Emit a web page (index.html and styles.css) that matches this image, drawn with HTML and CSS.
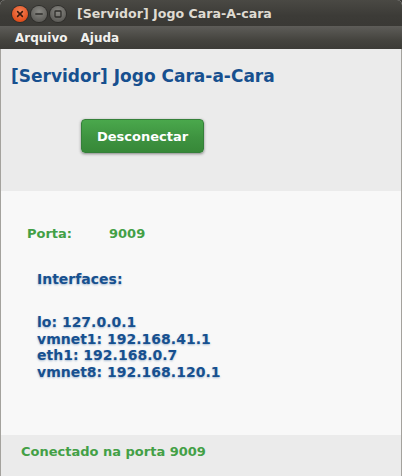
FILE: index.html
```html
<!DOCTYPE html>
<html>
<head>
<meta charset="utf-8">
<link rel="stylesheet" href="styles.css">
</head>
<body>
<div class="window">
  <div class="titlebar">
    <div class="controls">
      <span class="btn close"><svg width="16" height="16" viewBox="0 0 16 16"><path d="M5.6 5.6 L10.4 10.4 M10.4 5.6 L5.6 10.4" stroke="#3a1a0e" stroke-width="1.5" stroke-linecap="round"/></svg></span>
      <span class="btn"><svg width="16" height="16" viewBox="0 0 16 16"><path d="M4.8 8 H11.2" stroke="#2e2d2a" stroke-width="1.5" stroke-linecap="round"/></svg></span>
      <span class="btn"><svg width="16" height="16" viewBox="0 0 16 16"><rect x="5" y="5" width="6" height="6" rx="0.8" fill="none" stroke="#2e2d2a" stroke-width="1.3"/></svg></span>
    </div>
    <div class="wtitle">[Servidor] Jogo Cara-A-cara</div>
  </div>
  <div class="menubar">
    <span class="menu">Arquivo</span>
    <span class="menu">Ajuda</span>
  </div>
  <div class="top">
    <h1 class="heading">[Servidor] Jogo Cara-a-Cara</h1>
    <button class="action">Desconectar</button>
  </div>
  <div class="middle">
    <div class="port">
      <span class="port-label">Porta:</span>
      <span class="port-value">9009</span>
    </div>
    <div class="ifaces-title">Interfaces:</div>
    <div class="ifaces">
      <div>lo: 127.0.0.1</div>
      <div>vmnet1: 192.168.41.1</div>
      <div>eth1: 192.168.0.7</div>
      <div>vmnet8: 192.168.120.1</div>
    </div>
  </div>
  <div class="status">Conectado na porta 9009</div>
</div>
</body>
</html>
```

FILE: styles.css
```css
html, body {
  margin: 0;
  padding: 0;
  background: #3c3b37;
}
body {
  width: 402px;
  height: 476px;
  overflow: hidden;
  font-family: "DejaVu Sans", sans-serif;
}
.window {
  width: 402px;
  height: 476px;
  display: flex;
  flex-direction: column;
  background: #ebebeb;
  border-radius: 5px 5px 0 0;
  overflow: hidden;
}
.titlebar {
  height: 26px;
  flex: none;
  display: flex;
  align-items: center;
  background: linear-gradient(#4a4944, #3c3b37 60%, #3a3935);
}
.controls {
  display: flex;
  gap: 3px;
  padding-left: 12px;
  padding-top: 2px;
}
.btn {
  width: 16px;
  height: 16px;
  border-radius: 50%;
  background: radial-gradient(circle at 50% 35%, #8a8984, #5d5c58 75%);
  box-shadow: 0 0 0 1px #2f2e2b;
  display: block;
}
.btn svg { display: block; }
.btn.close {
  background: radial-gradient(circle at 50% 35%, #f4845a, #e2501e 70%, #c8410f);
}
.wtitle {
  margin-left: 11px;
  color: #dfdbd2;
  font-family: "DejaVu Sans", sans-serif;
  font-weight: bold;
  font-size: 12.6px;
  padding-top: 1px;
}
.menubar {
  height: 23px;
  flex: none;
  display: flex;
  align-items: center;
  gap: 13px;
  padding-left: 15px;
  background: linear-gradient(#5e5d59, #45443f 60%, #3c3b37);
}
.menu {
  color: #f2f1ef;
  font-weight: bold;
  font-size: 12px;
  padding-top: 1px;
}
.top {
  flex: none;
  height: 142px;
  box-sizing: border-box;
  padding: 17px 0 0 10px;
  background: #ebebeb;
  border-left: 1px solid #a4a29d;
  border-right: 1px solid #a4a29d;
}
.heading {
  margin: 0;
  font-size: 17px;
  line-height: 20px;
  font-weight: bold;
  color: #17508f;
}
.action {
  display: block;
  margin: 33px 0 0 70px;
  width: 123px;
  height: 34px;
  border: 1px solid #35803a;
  border-radius: 4px;
  background: linear-gradient(#4aa84c, #3e9340 55%, #378838);
  box-shadow: 0 1px 3px rgba(0, 0, 0, 0.45);
  color: #ffffff;
  font-family: "DejaVu Sans", sans-serif;
  font-weight: bold;
  font-size: 13px;
  padding: 0;
}
.middle {
  flex: none;
  height: 244px;
  box-sizing: border-box;
  padding: 35px 0 0 26px;
  background: #f8f8f8;
  border-left: 1px solid #a4a29d;
  border-right: 1px solid #a4a29d;
}
.port {
  display: flex;
  font-size: 13px;
  line-height: 16px;
  font-weight: bold;
  color: #43a046;
}
.port-label {
  width: 82px;
}
.ifaces-title {
  margin: 29px 0 0 10px;
  font-size: 14px;
  line-height: 17px;
  font-weight: bold;
  color: #17508f;
  text-shadow: 0 1px 2px rgba(23, 80, 143, 0.35);
}
.ifaces {
  margin: 26px 0 0 10px;
  font-size: 14px;
  line-height: 16.7px;
  font-weight: bold;
  color: #17508f;
  text-shadow: 0 1px 2px rgba(23, 80, 143, 0.35);
}
.status {
  flex: 1;
  box-sizing: border-box;
  padding: 9px 0 0 20px;
  font-size: 13px;
  line-height: 16px;
  font-weight: bold;
  color: #43a046;
  background: #ebebeb;
  border-left: 1px solid #a4a29d;
  border-right: 1px solid #a4a29d;
}
```
